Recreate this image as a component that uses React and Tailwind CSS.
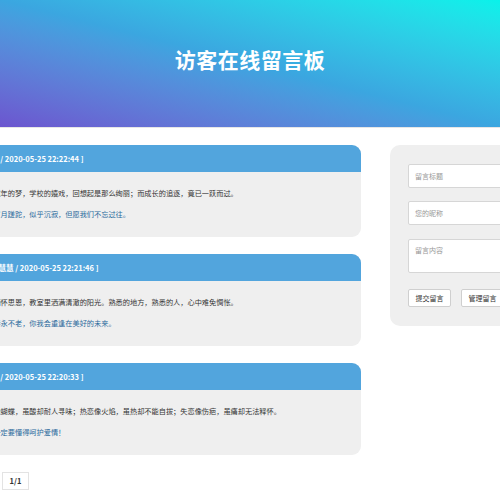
import React from 'react';

const messages = [
  {
    author: '小明',
    time: '2020-05-25 22:22:44',
    content: '昔日童年的梦，学校的嬉戏，回想起是那么绚丽；而成长的追逐，竟已一跃而过。',
    reply: '匆匆岁月蹉跎，似乎沉寂，但愿我们不忘过往。',
  },
  {
    author: '初心慧慧',
    time: '2020-05-25 22:21:46',
    content: '心中满怀思恩，教室里洒满清澈的阳光。熟悉的地方，熟悉的人，心中难免惆怅。',
    reply: '愿青春永不老，你我会重逢在美好的未来。',
  },
  {
    author: '小红',
    time: '2020-05-25 22:20:33',
    content: '初恋像蝴蝶，虽酸却耐人寻味；热恋像火焰，虽热却不能自拔；失恋像伤疤，虽痛却无法释怀。',
    reply: '我们一定要懂得呵护爱情！',
  },
];

const font = { fontFamily: '"Noto Sans CJK SC", "Noto Sans", sans-serif' };

const MessageCard = ({ m }) => (
  <div className="rounded-[9px] overflow-hidden bg-[#efefef]">
    <div className="h-[27px] bg-[#52a5dd] flex items-center pl-[118px] text-white text-[7.5px] font-bold whitespace-nowrap">
      [ {m.author} / {m.time} ]
    </div>
    <div className="h-[65px] flex flex-col pl-[118px] pt-[17px] gap-[12px] text-[7.2px] leading-[9px]">
      <div className="text-[#333] whitespace-nowrap">{m.content}</div>
      <div className="text-[#2a6a9c] whitespace-nowrap">{m.reply}</div>
    </div>
  </div>
);

const Field = ({ label, tall }) => (
  <div
    className={
      tall
        ? 'h-[34px] bg-white border border-[#d6d6d6] rounded-[2px] pl-[6px] pt-[5px] text-[7px] text-[#999]'
        : 'h-[24px] bg-white border border-[#d6d6d6] rounded-[2px] flex items-center pl-[6px] text-[7px] text-[#999]'
    }
  >
    {label}
  </div>
);

const App = () => {
  return (
    <div className="w-[500px] h-[500px] overflow-hidden bg-white" style={font}>
      <div className="h-[128px] bg-linear-to-tr from-[#6b55cf] via-[#3ba6e0] to-[#08f2ea] flex items-center justify-center border-b border-[#e6e6e6]">
        <h1 className="text-white text-[21px] font-bold tracking-[0.5px] -mt-[8px]">访客在线留言板</h1>
      </div>

      <div className="flex gap-[29px] ml-[-139px] pt-[17px]">
        <div className="w-[500px] shrink-0 flex flex-col gap-[17px]">
          {messages.map((m) => (
            <MessageCard key={m.time} m={m} />
          ))}
          <div className="ml-[141px] w-[27px] h-[18px] border border-[#e3e3e3] flex items-center justify-center text-[7.5px] text-[#333] font-semibold">
            1/1
          </div>
        </div>

        <div className="w-[240px] shrink-0 h-[181px] rounded-[10px] bg-[#efefef] pl-[18px] pt-[19px] flex flex-col">
          <Field label="留言标题" />
          <div className="mt-[13px]">
            <Field label="您的昵称" />
          </div>
          <div className="mt-[14px]">
            <Field label="留言内容" tall />
          </div>
          <div className="mt-[16px] flex gap-[10px]">
            <button className="h-[18px] w-[43px] bg-white border border-[#cfcfcf] rounded-[2px] text-[7px] text-[#333] flex items-center justify-center">
              提交留言
            </button>
            <button className="h-[18px] w-[43px] bg-white border border-[#cfcfcf] rounded-[2px] text-[7px] text-[#333] flex items-center justify-center">
              管理留言
            </button>
          </div>
        </div>
      </div>
    </div>
  );
};

export default App;
